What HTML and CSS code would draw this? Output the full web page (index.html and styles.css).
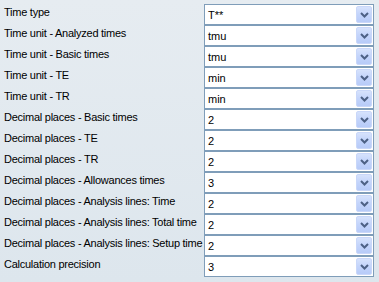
FILE: index.html
```html
<!DOCTYPE html>
<html>
<head>
<meta charset="utf-8">
<link rel="stylesheet" href="styles.css">
</head>
<body>
<div class="form">
  <div class="row"><span class="label">Time type</span><div class="combo"><span class="val">T**</span><span class="btn"><svg viewBox="0 0 9 6" width="9" height="6"><path d="M1 1 L4.5 4.5 L8 1" fill="none" stroke="#4d6185" stroke-width="2"/></svg></span></div></div>
  <div class="row"><span class="label">Time unit - Analyzed times</span><div class="combo"><span class="val">tmu</span><span class="btn"><svg viewBox="0 0 9 6" width="9" height="6"><path d="M1 1 L4.5 4.5 L8 1" fill="none" stroke="#4d6185" stroke-width="2"/></svg></span></div></div>
  <div class="row"><span class="label">Time unit - Basic times</span><div class="combo"><span class="val">tmu</span><span class="btn"><svg viewBox="0 0 9 6" width="9" height="6"><path d="M1 1 L4.5 4.5 L8 1" fill="none" stroke="#4d6185" stroke-width="2"/></svg></span></div></div>
  <div class="row"><span class="label">Time unit - TE</span><div class="combo"><span class="val">min</span><span class="btn"><svg viewBox="0 0 9 6" width="9" height="6"><path d="M1 1 L4.5 4.5 L8 1" fill="none" stroke="#4d6185" stroke-width="2"/></svg></span></div></div>
  <div class="row"><span class="label">Time unit - TR</span><div class="combo"><span class="val">min</span><span class="btn"><svg viewBox="0 0 9 6" width="9" height="6"><path d="M1 1 L4.5 4.5 L8 1" fill="none" stroke="#4d6185" stroke-width="2"/></svg></span></div></div>
  <div class="row"><span class="label">Decimal places - Basic times</span><div class="combo"><span class="val">2</span><span class="btn"><svg viewBox="0 0 9 6" width="9" height="6"><path d="M1 1 L4.5 4.5 L8 1" fill="none" stroke="#4d6185" stroke-width="2"/></svg></span></div></div>
  <div class="row"><span class="label">Decimal places - TE</span><div class="combo"><span class="val">2</span><span class="btn"><svg viewBox="0 0 9 6" width="9" height="6"><path d="M1 1 L4.5 4.5 L8 1" fill="none" stroke="#4d6185" stroke-width="2"/></svg></span></div></div>
  <div class="row"><span class="label">Decimal places - TR</span><div class="combo"><span class="val">2</span><span class="btn"><svg viewBox="0 0 9 6" width="9" height="6"><path d="M1 1 L4.5 4.5 L8 1" fill="none" stroke="#4d6185" stroke-width="2"/></svg></span></div></div>
  <div class="row"><span class="label">Decimal places - Allowances times</span><div class="combo"><span class="val">3</span><span class="btn"><svg viewBox="0 0 9 6" width="9" height="6"><path d="M1 1 L4.5 4.5 L8 1" fill="none" stroke="#4d6185" stroke-width="2"/></svg></span></div></div>
  <div class="row"><span class="label">Decimal places - Analysis lines: Time</span><div class="combo"><span class="val">2</span><span class="btn"><svg viewBox="0 0 9 6" width="9" height="6"><path d="M1 1 L4.5 4.5 L8 1" fill="none" stroke="#4d6185" stroke-width="2"/></svg></span></div></div>
  <div class="row"><span class="label">Decimal places - Analysis lines: Total time</span><div class="combo"><span class="val">2</span><span class="btn"><svg viewBox="0 0 9 6" width="9" height="6"><path d="M1 1 L4.5 4.5 L8 1" fill="none" stroke="#4d6185" stroke-width="2"/></svg></span></div></div>
  <div class="row"><span class="label">Decimal places - Analysis lines: Setup time</span><div class="combo"><span class="val">2</span><span class="btn"><svg viewBox="0 0 9 6" width="9" height="6"><path d="M1 1 L4.5 4.5 L8 1" fill="none" stroke="#4d6185" stroke-width="2"/></svg></span></div></div>
  <div class="row"><span class="label">Calculation precision</span><div class="combo"><span class="val">3</span><span class="btn"><svg viewBox="0 0 9 6" width="9" height="6"><path d="M1 1 L4.5 4.5 L8 1" fill="none" stroke="#4d6185" stroke-width="2"/></svg></span></div></div>
</div>
</body>
</html>
```
FILE: styles.css
```css
html, body {
  margin: 0;
  padding: 0;
  height: 100%;
}
body {
  background: linear-gradient(180deg, #e6ecf1 0%, #dde6ed 100%);
  font-family: "Liberation Sans", Arial, sans-serif;
  font-size: 11px;
  letter-spacing: -0.25px;
  color: #000;
}
.form {
  padding: 4px 5px 0 4px;
  display: flex;
  flex-direction: column;
}
.row {
  display: grid;
  grid-template-columns: 200px 170px;
  height: 21px;
  align-items: center;
}
.label {
  white-space: nowrap;
  position: relative;
  top: -3px;
}
.combo {
  box-sizing: border-box;
  height: 21px;
  border: 1px solid #7f9db9;
  background: #fff;
  display: flex;
  align-items: center;
  padding: 0 1px 0 3px;
  letter-spacing: 0;
}
.val {
  flex: 1;
}
.btn {
  box-sizing: border-box;
  width: 16px;
  height: 17px;
  border-radius: 2px;
  background: linear-gradient(180deg, #d6e2fc 0%, #c3d4fb 50%, #b7cbf8 100%);
  border: 1px solid #c9d7f9;
  display: flex;
  align-items: center;
  justify-content: center;
}
.btn svg {
  display: block;
}
```
